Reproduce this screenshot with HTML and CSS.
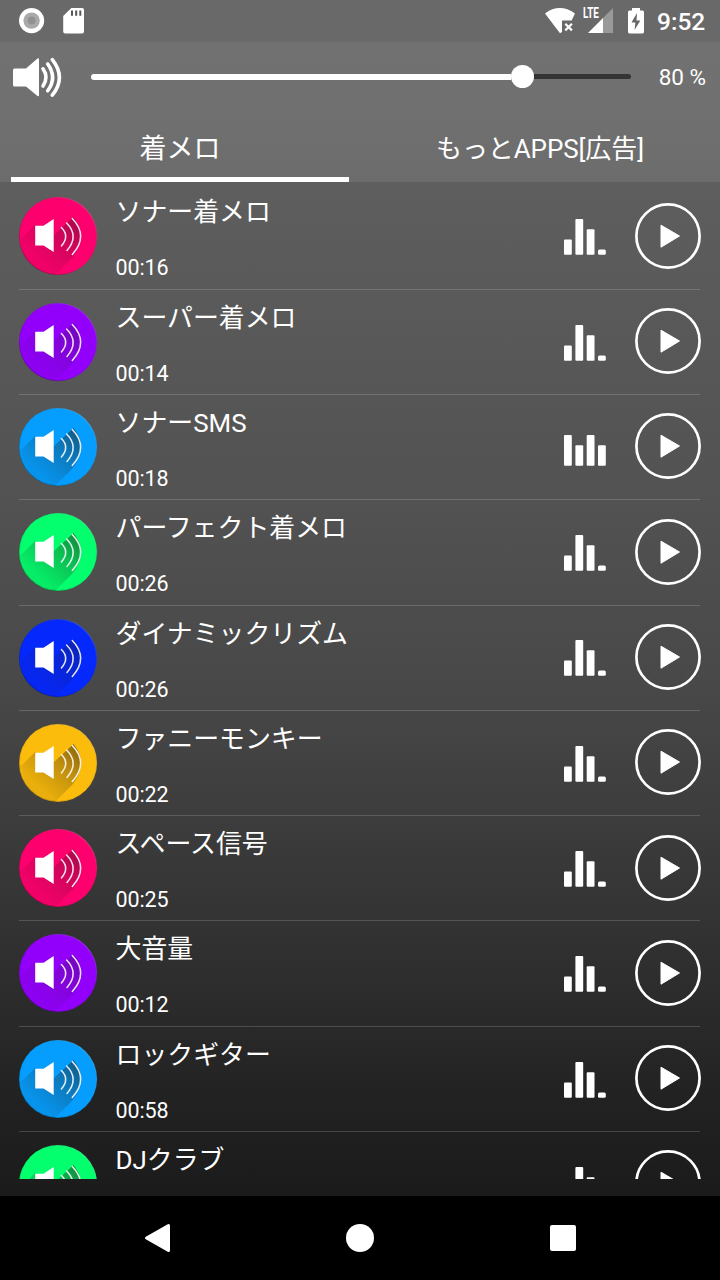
FILE: index.html
```html
<!DOCTYPE html>
<html lang="ja">
<head>
<meta charset="utf-8">
<title>着メロ</title>
<link rel="stylesheet" href="styles.css">
</head>
<body>
<svg class="defs" width="0" height="0" aria-hidden="true">
  <defs>
    <linearGradient id="fade" gradientUnits="userSpaceOnUse" x1="60" y1="26" x2="22" y2="66">
      <stop offset="0" stop-color="#201810" stop-opacity=".5"/>
      <stop offset=".4" stop-color="#201810" stop-opacity=".28"/>
      <stop offset="1" stop-color="#201810" stop-opacity=".08"/>
    </linearGradient>
    <linearGradient id="rim" x1="0" y1="1" x2="1" y2="0">
      <stop offset="0" stop-color="#000" stop-opacity=".3"/>
      <stop offset=".5" stop-color="#000" stop-opacity="0"/>
      <stop offset="1" stop-color="#fff" stop-opacity=".3"/>
    </linearGradient>
    <symbol id="sound" viewBox="0 0 80 80">
      <circle cx="40" cy="40" r="39" fill="currentColor"/>
      <path class="shade" d="M17 29 3 43Q5 71 37 79L55 61Q71 40 55.500 21L36 39Z" fill="url(#fade)"/>
      <circle cx="40" cy="40" r="38.6" fill="none" stroke="url(#rim)" stroke-width="1.2"/>
      <path d="M17.2 29.8H25.5L35.7 23V56L25.5 49.5H17.2Z" fill="#fff"/>
      <g fill="none" stroke="#fff" stroke-opacity=".88" stroke-width="1.5" stroke-linecap="round">
        <path d="M43.4 31.5Q52 40 43.4 50M48.6 27Q61.5 40 49 54.500M54.3 22.500Q71 40 54.3 58.500"/>
      </g>
    </symbol>
    <symbol id="play" viewBox="0 0 68 68">
      <circle cx="34" cy="34" r="31.6" fill="none" stroke="#fff" stroke-width="2.7"/>
      <path d="M27 23.2 45.5 34 27 45.2Z" fill="#fff" stroke="#fff" stroke-width="1" stroke-linejoin="round"/>
    </symbol>
    <symbol id="bars-a" viewBox="0 0 42 36">
      <g fill="#fff"><rect y="20.5" width="7.8" height="15.2" rx="1"/><rect x="11.4" y="0" width="7.8" height="35.7" rx="1"/><rect x="22.7" y="10.2" width="7.8" height="25.5" rx="1"/><rect x="34" y="30.6" width="7.8" height="5.1" rx="1.5"/></g>
    </symbol>
    <symbol id="bars-b" viewBox="0 0 42 36">
      <g fill="#fff"><rect y="5.1" width="7.8" height="30.6" rx="1"/><rect x="11.4" y="15.3" width="7.8" height="20.4" rx="1"/><rect x="22.7" y="5.1" width="7.8" height="30.6" rx="1"/><rect x="34" y="15.3" width="7.8" height="20.4" rx="1"/></g>
    </symbol>
  </defs>
</svg>
<div class="screen">
  <header class="status">
    <svg class="status-left" width="70" height="28" viewBox="0 0 70 28">
      <circle cx="13.6" cy="13.6" r="12.6" fill="#fff"/><circle cx="13.6" cy="13.6" r="8.2" fill="#a9a9a9"/><circle cx="13.6" cy="13.6" r="4" fill="#919191"/>
      <path d="M53.4 1H64q2 0 2 2V24.4q0 2-2 2H47.2q-2 0-2-2V9Z" fill="#fff"/>
      <path d="M54 3.5V8.7M58.2 3.5V8.7M62.3 3.5V8.7" stroke="#555" stroke-width="2"/>
    </svg>
    <div class="status-right">
      <svg width="32" height="28" viewBox="0 0 32 28"><path d="M1 6.4Q15.5-4.4 31 6.4L27.6 13.600H18V25L16 26.3Z" fill="#fff"/><path d="m21.3 16.8 6.6 6.6m0-6.6-6.6 6.6" stroke="#fff" stroke-width="2.2"/></svg>
      <div class="cell">
        <svg width="32" height="28" viewBox="0 0 32 28"><path d="M31 1V26H20V12Z" fill="#999"/><path d="M21 11V26H6Z" fill="#fff"/></svg>
        <span class="lte">LTE</span>
      </div>
      <svg class="battery" width="18" height="28" viewBox="0 0 18 28"><path d="M5 1h8v2.5h2.5q1.500 0 1.500 1.500v20q0 1.400-1.500 1.400h-13Q1 26.400 1 25V5q0-1.500 1.500-1.500H5Z" fill="#fff"/><path d="M10 6 4.5 15.500H8.400L7.600 23 13.300 13.400H9.500Z" fill="#666"/></svg>
      <span class="clock">9:52</span>
    </div>
  </header>
  <section class="volume">
    <svg class="speaker" width="50" height="42" viewBox="0 0 50 42"><path d="M2.5 11.5H14L25.5 1.5Q27 .5 27 2.5V38Q27 40 25.5 39L14 29.5H2.5Q1 29.5 1 28V13Q1 11.5 2.5 11.5Z" fill="#fff"/><g fill="none" stroke="#fff" stroke-width="3.6" stroke-linecap="round"><path d="M31 11.8Q37 20.5 31 29"/><path d="M35.7 7Q45.5 20.5 35.7 33.8"/><path d="M40.3 2.6Q54.5 20.5 40.3 38.2"/></g></svg>
    <div class="slider"><div class="played"></div><div class="thumb"></div><div class="rest"></div></div>
    <span class="percent">80 %</span>
  </section>
  <nav class="tabs">
    <div class="tab active">着メロ</div>
    <div class="tab more">もっとAPPS[広告]</div>
  </nav>
  <main class="list">
    <div class="row"><svg class="disc pink"><use href="#sound"/></svg><div class="info"><div class="title">ソナー着メロ</div><div class="time">00:16</div></div><svg class="bars"><use href="#bars-a"/></svg><svg class="play"><use href="#play"/></svg></div>
    <div class="row"><svg class="disc purple"><use href="#sound"/></svg><div class="info"><div class="title">スーパー着メロ</div><div class="time">00:14</div></div><svg class="bars"><use href="#bars-a"/></svg><svg class="play"><use href="#play"/></svg></div>
    <div class="row"><svg class="disc sky"><use href="#sound"/></svg><div class="info"><div class="title">ソナーSMS</div><div class="time">00:18</div></div><svg class="bars"><use href="#bars-b"/></svg><svg class="play"><use href="#play"/></svg></div>
    <div class="row"><svg class="disc green"><use href="#sound"/></svg><div class="info"><div class="title">パーフェクト着メロ</div><div class="time">00:26</div></div><svg class="bars"><use href="#bars-a"/></svg><svg class="play"><use href="#play"/></svg></div>
    <div class="row"><svg class="disc blue"><use href="#sound"/></svg><div class="info"><div class="title">ダイナミックリズム</div><div class="time">00:26</div></div><svg class="bars"><use href="#bars-a"/></svg><svg class="play"><use href="#play"/></svg></div>
    <div class="row"><svg class="disc amber"><use href="#sound"/></svg><div class="info"><div class="title">ファニーモンキー</div><div class="time">00:22</div></div><svg class="bars"><use href="#bars-a"/></svg><svg class="play"><use href="#play"/></svg></div>
    <div class="row"><svg class="disc pink"><use href="#sound"/></svg><div class="info"><div class="title">スペース信号</div><div class="time">00:25</div></div><svg class="bars"><use href="#bars-a"/></svg><svg class="play"><use href="#play"/></svg></div>
    <div class="row"><svg class="disc purple"><use href="#sound"/></svg><div class="info"><div class="title">大音量</div><div class="time">00:12</div></div><svg class="bars"><use href="#bars-a"/></svg><svg class="play"><use href="#play"/></svg></div>
    <div class="row"><svg class="disc sky"><use href="#sound"/></svg><div class="info"><div class="title">ロックギター</div><div class="time">00:58</div></div><svg class="bars"><use href="#bars-a"/></svg><svg class="play"><use href="#play"/></svg></div>
    <div class="row"><svg class="disc green"><use href="#sound"/></svg><div class="info"><div class="title">DJクラブ</div></div><svg class="bars"><use href="#bars-a"/></svg><svg class="play"><use href="#play"/></svg></div>
  </main>
  <footer class="navbar">
    <svg width="28" height="30" viewBox="0 0 28 30"><path d="M25.5 2.500V27.500L3.500 15Z" fill="#fff" stroke="#fff" stroke-width="3" stroke-linejoin="round"/></svg>
    <div class="home"></div>
    <div class="recent"></div>
  </footer>
</div>
</body>
</html>
```
FILE: styles.css
```css
* { box-sizing: border-box; }
body { margin: 0; background: #000; }
.defs { position: absolute; }
.screen {
  width: 720px;
  height: 1280px;
  overflow: hidden;
  display: flex;
  flex-direction: column;
  color: #fff;
  font-family: Roboto, "Noto Sans CJK JP", sans-serif;
  background: linear-gradient(#636363 0, #5e5e5e 182px, #535353 480px, #484848 690px, #353535 900px, #212121 1110px, #1b1b1b 1196px);
}
.status {
  height: 42px;
  flex: none;
  padding: 7px 14px 0 18px;
  display: flex;
  justify-content: space-between;
  background: #696969;
}
.status-right { display: flex; }
.cell { position: relative; margin-left: 6px; width: 32px; }
.lte {
  position: absolute;
  left: 1px;
  top: 0;
  font: 700 14.5px/14px Roboto, sans-serif;
  transform: scaleX(.68);
  transform-origin: 0 0;
}
.battery { margin-left: 13px; }
.clock { margin-left: 12px; font-size: 24.5px; line-height: 30px; font-weight: 500; width: 49px; white-space: nowrap; }
.volume {
  height: 71px;
  flex: none;
  display: flex;
  align-items: center;
  padding: 0 14px 0 12px;
  background: linear-gradient(#717171, #707070);
}
.speaker { flex: none; }
.slider { display: flex; align-items: center; width: 540px; margin-left: 29px; margin-top: -2px; }
.played { width: 420px; height: 6px; border-radius: 3px 0 0 3px; background: #fff; }
.thumb { width: 23px; height: 23px; border-radius: 50%; background: #fff; }
.rest { flex: 1; height: 5px; border-radius: 0 3px 3px 0; background: #343434; }
.percent { margin-left: auto; margin-top: -2px; font-size: 22.5px; white-space: nowrap; }
.tabs {
  height: 69px;
  flex: none;
  display: flex;
  padding: 0 11px;
  background: linear-gradient(#707070, #6c6c6c);
}
.tab { flex: 0 0 338px; height: 69px; padding-top: 2px; font-size: 27px; line-height: 67px; text-align: center; }
.tab.more { margin-left: 22px; font-size: 26px; letter-spacing: -.1px; line-height: 68px; }
.tab.active { border-bottom: 5px solid #fff; line-height: 69px; }
.list { height: 997px; flex: none; overflow: hidden; padding: 2.4px 20px 0 18px; }
.row { height: 105.3px; display: flex; align-items: flex-start; border-bottom: 1px solid rgba(255, 255, 255, .17); margin-left: 1px; }
.disc { flex: none; width: 80px; height: 80px; margin: 12px 0 0 -1px; --shade: 1; }
.shade { opacity: var(--shade); }
.info { flex: 1; margin-left: 17.5px; }
.title { height: 69px; padding-top: 9px; font-size: 25.9px; line-height: 38px; white-space: nowrap; }
.time { font-size: 21.5px; line-height: 30px; letter-spacing: -.1px; }
.bars { flex: none; width: 42px; height: 36px; margin: 34.9px 28px 0 0; }
.play { flex: none; width: 68px; height: 68px; margin: 17.4px -2px 0 0; }
.pink { color: #fe006e; --shade: .75; }
.purple { color: #9200fc; --shade: .55; }
.sky { color: #059efe; }
.green { color: #04ff6e; }
.blue { color: #0528fc; --shade: .6; }
.amber { color: #fcbc0c; }
.navbar {
  height: 84px;
  flex: none;
  margin-top: 17px;
  padding: 0 144px 0 143px;
  display: flex;
  align-items: center;
  justify-content: space-between;
  background: #000;
}
.home { width: 28px; height: 28px; border-radius: 50%; background: #fff; margin-left: -2px; }
.recent { width: 26px; height: 26px; border-radius: 2px; background: #fff; }
```
